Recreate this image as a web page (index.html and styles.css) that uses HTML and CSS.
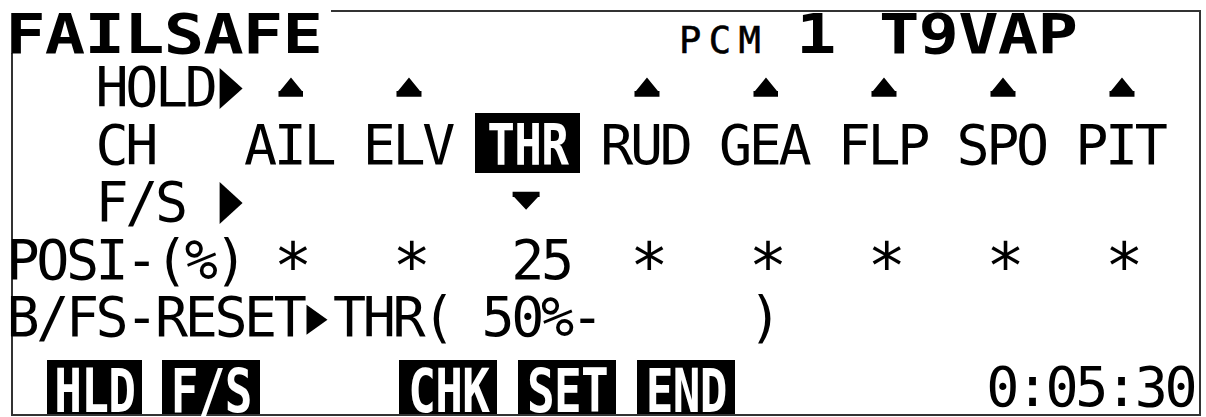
FILE: index.html
```html
<!DOCTYPE html>
<html lang="en">
<head>
<meta charset="utf-8">
<title>FAILSAFE</title>
<link rel="stylesheet" href="styles.css">
</head>
<body>
<div class="lcd">
  <div class="head">
    <div class="title">FAILSAFE</div>
    <div class="head-rest">
      <span class="pcm">PCM</span>
      <span class="big one">1</span>
      <span class="big model">T9VAP</span>
    </div>
  </div>
  <div class="body">
    <div class="row">
      <span class="c3">HOLD</span>
      <svg class="c7" viewBox="0 0 29.7 57.5"><path d="M5.6 9 L28.6 29.5 L5.6 50 Z"/></svg>
      <svg class="c9" viewBox="0 0 29.7 57.5"><path d="M17 18.5 L28 32 H29.5 V37.7 H4.5 V32 H6 Z"/></svg>
      <svg class="c13" viewBox="0 0 29.7 57.5"><path d="M17 18.5 L28 32 H29.5 V37.7 H4.5 V32 H6 Z"/></svg>
      <svg class="c21" viewBox="0 0 29.7 57.5"><path d="M17 18.5 L28 32 H29.5 V37.7 H4.5 V32 H6 Z"/></svg>
      <svg class="c25" viewBox="0 0 29.7 57.5"><path d="M17 18.5 L28 32 H29.5 V37.7 H4.5 V32 H6 Z"/></svg>
      <svg class="c29" viewBox="0 0 29.7 57.5"><path d="M17 18.5 L28 32 H29.5 V37.7 H4.5 V32 H6 Z"/></svg>
      <svg class="c33" viewBox="0 0 29.7 57.5"><path d="M17 18.5 L28 32 H29.5 V37.7 H4.5 V32 H6 Z"/></svg>
      <svg class="c37" viewBox="0 0 29.7 57.5"><path d="M17 18.5 L28 32 H29.5 V37.7 H4.5 V32 H6 Z"/></svg>
    </div>
    <div class="row">
      <span class="c3">CH</span>
      <span class="c8">AIL</span>
      <span class="c12">ELV</span>
      <span class="c16 sel"><span class="inv inv-sel">THR</span></span>
      <span class="c20">RUD</span>
      <span class="c24">GEA</span>
      <span class="c28">FLP</span>
      <span class="c32">SPO</span>
      <span class="c36">PIT</span>
    </div>
    <div class="row">
      <span class="c3">F/S</span>
      <svg class="c7" viewBox="0 0 29.7 57.5"><path d="M5.6 8 L28.6 29 L5.6 50 Z"/></svg>
      <svg class="c17" viewBox="0 0 29.7 57.5"><path d="M1.6 17.7 H28.6 V23 H27 L15.1 35.7 L3.2 23 H1.6 Z"/></svg>
    </div>
    <div class="row">
      <span class="c0">POSI-(%)</span>
      <span class="c9 ast">*</span>
      <span class="c13 ast">*</span>
      <span class="c17">25</span>
      <span class="c21 ast">*</span>
      <span class="c25 ast">*</span>
      <span class="c29 ast">*</span>
      <span class="c33 ast">*</span>
      <span class="c37 ast">*</span>
    </div>
    <div class="row">
      <span class="c0">B/FS-RESET</span>
      <svg class="c10" viewBox="0 0 29.7 57.5"><path d="M3.5 15.7 L24.5 30.7 L3.5 45.7 Z"/></svg>
      <span class="c11">THR( 50%-     )</span>
    </div>
    <div class="row keys">
      <span class="c1 key key-first"><span class="inv">HLD</span></span>
      <span class="c5 key"><span class="inv">F/S</span></span>
      <span class="c13 key"><span class="inv">CHK</span></span>
      <span class="c17 key"><span class="inv">SET</span></span>
      <span class="c21 key"><span class="inv">END</span></span>
      <span class="c33 time">0:05:30</span>
    </div>
  </div>
</div>
</body>
</html>
```

FILE: styles.css
```css
* {
  box-sizing: border-box;
  margin: 0;
  padding: 0;
}

html,
body {
  background: #ffffff;
}

body {
  width: 1206px;
  height: 417px;
  overflow: hidden;
  color: #000000;
  font-family: "DejaVu Sans Mono", "Liberation Mono", monospace;
}

.lcd {
  margin: 10px 0 0 11px;
  width: 1190px;
}

/* ---------- header line ---------- */
.head {
  display: flex;
  height: 43px;
}

.title {
  flex: none;
  width: 320px;
  font-weight: bold;
  font-size: 56px;
  line-height: 47px;
  letter-spacing: -0.715px;
  text-indent: -4.8px;
  white-space: pre;
  transform-origin: 0 0;
  transform: scaleX(1.2);
}

.head-rest {
  flex: 1;
  display: flex;
  align-items: baseline;
  border-top: 2px solid #333333;
  border-right: 2px solid #333333;
  white-space: pre;
}

.pcm {
  margin-left: 348px;
  font-size: 37px;
  line-height: 43px;
  letter-spacing: 7.424px;
  -webkit-text-stroke: 0.6px #000000;
}

.big {
  font-weight: bold;
  font-size: 56px;
  line-height: 43px;
  letter-spacing: -0.715px;
  transform-origin: 0 0;
  transform: scaleX(1.2);
}

.one {
  margin-left: 27.9px;
}

.model {
  margin-left: 50.4px;
}

/* ---------- framed body ---------- */
.body {
  height: 363px;
  padding-top: 6.3px;
  border: 2px solid #333333;
  border-top: 0;
}

.row {
  display: grid;
  grid-template-columns: repeat(40, 29.7px);
  grid-template-rows: 57.5px;
  height: 57.5px;
  margin-left: -6.5px;
  font-size: 55px;
  line-height: 57.5px;
  letter-spacing: -3.413px;
  white-space: pre;
}

.row > * {
  grid-row: 1;
}

.row svg {
  display: block;
  width: 29.7px;
  height: 57.5px;
  fill: #000000;
}

.ast {
  font-size: 64px;
  line-height: 40px;
  height: 40px;
  margin-top: 14.6px;
}

.c0 { grid-column-start: 1; }
.c1 { grid-column-start: 2; }
.c3 { grid-column-start: 4; }
.c5 { grid-column-start: 6; }
.c7 { grid-column-start: 8; }
.c8 { grid-column-start: 9; }
.c9 { grid-column-start: 10; }
.c10 { grid-column-start: 11; }
.c11 { grid-column-start: 12; }
.c12 { grid-column-start: 13; }
.c13 { grid-column-start: 14; }
.c16 { grid-column-start: 17; }
.c17 { grid-column-start: 18; }
.c20 { grid-column-start: 21; }
.c21 { grid-column-start: 22; }
.c24 { grid-column-start: 25; }
.c25 { grid-column-start: 26; }
.c28 { grid-column-start: 29; }
.c29 { grid-column-start: 30; }
.c32 { grid-column-start: 33; }
.c33 { grid-column-start: 34; }
.c36 { grid-column-start: 37; }
.c37 { grid-column-start: 38; }

/* inverted (highlighted) cells */
.sel,
.key {
  justify-self: start;
  display: flex;
  justify-content: center;
  align-items: flex-start;
  background: #000000;
  color: #ffffff;
  padding-top: 18px;
}

.sel {
  width: 105px;
  height: 60px;
  margin: -3.8px 0 0 -6.7px;
}

.inv {
  display: inline-block;
  height: 36px;
  font-weight: bold;
  font-size: 46px;
  line-height: 36px;
  letter-spacing: -0.7px;
  text-indent: 0.7px;
  transform-origin: 50% 33.9px;
  transform: scaleY(1.32);
}

.inv-sel {
  transform: scaleY(1.254);
}

/* soft-key row */
.keys {
  height: 67.2px;
  grid-template-rows: 67.2px;
}

.key {
  width: 98px;
  height: 54px;
  margin: 13.2px 0 0 7px;
}

.key-first {
  width: 95px;
  margin-left: 10.8px;
}

.time {
  margin-top: 13.2px;
  line-height: 54px;
}
```
